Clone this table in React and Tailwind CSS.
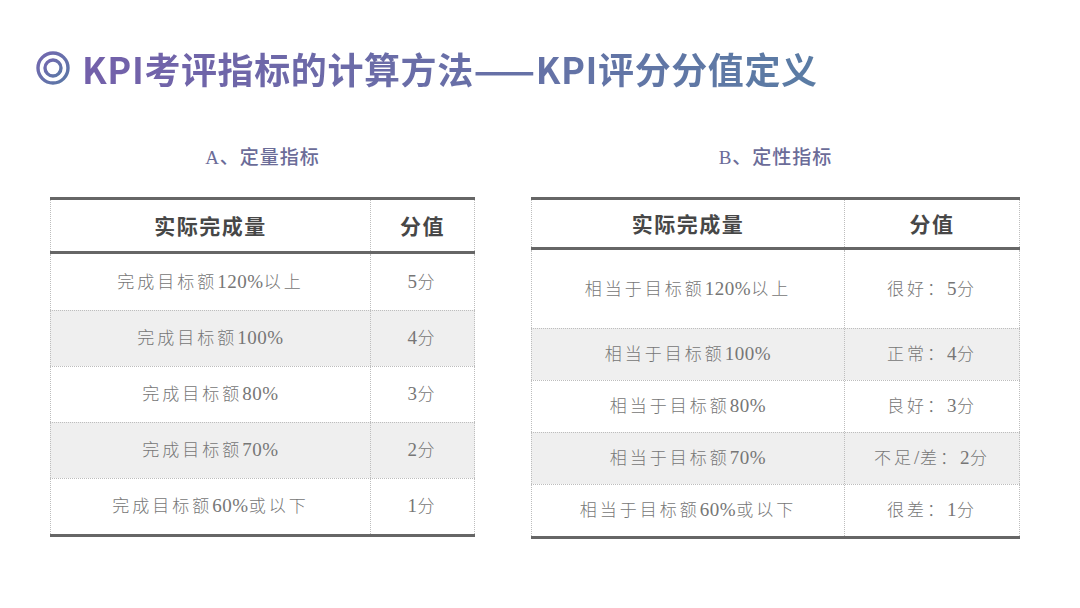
// App.jsx

const rowsA = [
  { label: "完成目标额120%以上", score: "5分", grey: false },
  { label: "完成目标额100%", score: "4分", grey: true },
  { label: "完成目标额80%", score: "3分", grey: false },
  { label: "完成目标额70%", score: "2分", grey: true },
  { label: "完成目标额60%或以下", score: "1分", grey: false },
];

const rowsB = [
  { label: "相当于目标额120%以上", score: "很好：5分", grey: false, h: "h-[78px]" },
  { label: "相当于目标额100%", score: "正常：4分", grey: true, h: "h-[52px]" },
  { label: "相当于目标额80%", score: "良好：3分", grey: false, h: "h-[52px]" },
  { label: "相当于目标额70%", score: "不足/差：2分", grey: true, h: "h-[52px]" },
  { label: "相当于目标额60%或以下", score: "很差：1分", grey: false, h: "h-[52px]" },
];

// latin runs are a touch larger and tighter, chinese text is spaced out
function Spaced({ text }) {
  const parts = text.split(/([0-9A-Za-z%/]+)/).filter(Boolean);
  return (
    <span className="tracking-[3px]">
      {parts.map((p, i) =>
        /[0-9A-Za-z%/]/.test(p) ? (
          <span key={i} className="text-[19px] tracking-[0.5px]">
            {p}
          </span>
        ) : (
          <span key={i}>{p}</span>
        )
      )}
    </span>
  );
}

function HeaderRow({ first, second, height }) {
  return (
    <div className={`flex ${height} border-b-[3px] border-[#666]`}>
      <div className="flex flex-1 items-center justify-center border-l border-dotted border-[#bdbdbd] text-[21px] font-bold tracking-[1.5px] text-[#474747]">
        {first}
      </div>
      <div className="flex items-center justify-center border-x border-dotted border-[#bdbdbd] text-[21px] font-bold tracking-[1.5px] text-[#474747]" style={{ width: second.w }}>
        {second.t}
      </div>
    </div>
  );
}

function ScoreTable({ title, width, colW, headH, rows }) {
  return (
    <div className="flex flex-col" style={{ width }}>
      <div className="h-[24px] text-center font-['Liberation_Serif','Noto_Sans_CJK_SC',serif] text-[19px] font-medium leading-[24px] tracking-[1px] text-[#6b6c98]">
        {title}
      </div>
      <div className="mt-[27px] border-y-[3px] border-[#666]">
        <HeaderRow first="实际完成量" second={{ t: "分值", w: colW }} height={headH} />
        {rows.map((r, i) => (
          <div
            key={i}
            className={`flex ${r.h || "h-[56px]"} ${i > 0 ? "border-t border-dotted border-[#bdbdbd]" : ""} ${r.grey ? "bg-[#efefef]" : "bg-white"}`}
          >
            <div className="flex flex-1 items-center justify-center border-l border-dotted border-[#bdbdbd] font-['Liberation_Serif','Noto_Sans_CJK_SC',serif] text-[17px] font-light text-[#767676]">
              <Spaced text={r.label} />
            </div>
            <div
              className="flex items-center justify-center border-x border-dotted border-[#bdbdbd] font-['Liberation_Serif','Noto_Sans_CJK_SC',serif] text-[17px] font-light text-[#767676]"
              style={{ width: colW }}
            >
              <Spaced text={r.score} />
            </div>
          </div>
        ))}
      </div>
    </div>
  );
}

export default function App() {
  return (
    <div className="h-[608px] w-[1080px] overflow-hidden bg-white font-['Noto_Sans_CJK_SC',sans-serif]">
      <div className="flex items-center gap-[12px] pl-[36px] pt-[48px]">
        <svg width="34" height="34" viewBox="0 0 34 34">
          <defs>
            <linearGradient id="ring" x1="0" y1="0" x2="1" y2="1">
              <stop offset="0" stopColor="#7467b0" />
              <stop offset="1" stopColor="#5a78a6" />
            </linearGradient>
          </defs>
          <circle cx="17" cy="17" r="15" fill="none" stroke="url(#ring)" strokeWidth="3.4" />
          <circle cx="17" cy="17" r="8" fill="none" stroke="url(#ring)" strokeWidth="3.4" />
        </svg>
        <h1 className="bg-gradient-to-r from-[#7360aa] to-[#5a7ca4] bg-clip-text text-[36px] font-bold leading-[40px] tracking-[0.6px] text-transparent">
          KPI考评指标的计算方法——KPI评分分值定义
        </h1>
      </div>

      <div className="mt-[58px] flex items-start pl-[50px]">
        <ScoreTable title="A、定量指标" width={425} colW={105} headH="h-[54px]" rows={rowsA} />
        <div className="w-[56px]" />
        <ScoreTable title="B、定性指标" width={489} colW={176} headH="h-[50px]" rows={rowsB} />
      </div>
    </div>
  );
}
